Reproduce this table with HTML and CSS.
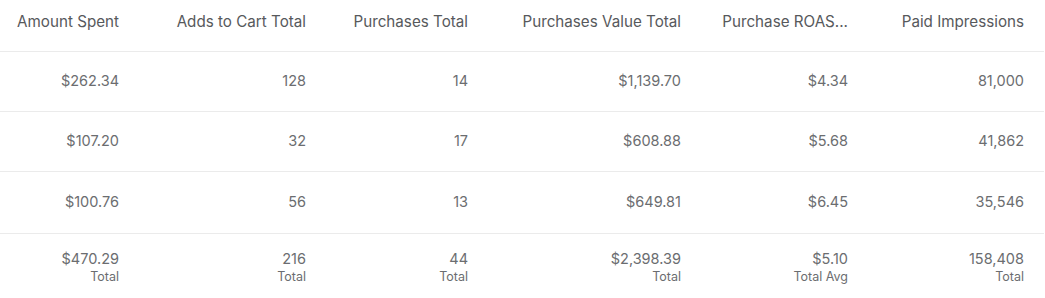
FILE: index.html
```html
<!DOCTYPE html>
<html lang="en">
<head>
<meta charset="utf-8">
<title>Ad metrics</title>
<link rel="stylesheet" href="styles.css">
</head>
<body>
<table class="metrics">
  <colgroup>
    <col class="c1"><col class="c2"><col class="c3"><col class="c4"><col class="c5"><col class="c6">
  </colgroup>
  <thead>
    <tr>
      <th>Amount Spent</th>
      <th>Adds to Cart Total</th>
      <th>Purchases Total</th>
      <th>Purchases Value Total</th>
      <th>Purchase ROAS...</th>
      <th>Paid Impressions</th>
    </tr>
  </thead>
  <tbody>
    <tr>
      <td>$262.34</td><td>128</td><td>14</td><td>$1,139.70</td><td>$4.34</td><td>81,000</td>
    </tr>
    <tr>
      <td>$107.20</td><td>32</td><td>17</td><td>$608.88</td><td>$5.68</td><td>41,862</td>
    </tr>
    <tr class="last">
      <td>$100.76</td><td>56</td><td>13</td><td>$649.81</td><td>$6.45</td><td>35,546</td>
    </tr>
  </tbody>
  <tfoot>
    <tr>
      <td><span class="val">$470.29</span><span class="lbl">Total</span></td>
      <td><span class="val">216</span><span class="lbl">Total</span></td>
      <td><span class="val">44</span><span class="lbl">Total</span></td>
      <td><span class="val">$2,398.39</span><span class="lbl">Total</span></td>
      <td><span class="val">$5.10</span><span class="lbl">Total Avg</span></td>
      <td><span class="val">158,408</span><span class="lbl">Total</span></td>
    </tr>
  </tfoot>
</table>
</body>
</html>
```
FILE: styles.css
```css
html, body {
  margin: 0;
  padding: 0;
  background: #ffffff;
}
body {
  font-family: Inter, "Liberation Sans", sans-serif;
  color: #6b6e72;
}
.metrics {
  width: 1044px;
  border-collapse: collapse;
  table-layout: fixed;
}
.c1 { width: 139px; }
.c2 { width: 187px; }
.c3 { width: 162px; }
.c4 { width: 213px; }
.c5 { width: 167px; }
.c6 { width: 176px; }

.metrics th,
.metrics td {
  text-align: right;
  padding: 0 20px 0 0;
  white-space: nowrap;
  overflow: hidden;
}
.metrics th {
  height: 51px;
  font-size: 15.2px;
  font-weight: 400;
  line-height: 20px;
  color: #57595c;
  vertical-align: top;
  padding-top: 12px;
  box-sizing: border-box;
  border-bottom: 1px solid #ebebeb;
}
.metrics tbody td {
  height: 59px;
  font-size: 14.5px;
  line-height: 18px;
  color: #6b6d70;
  border-bottom: 1px solid #ebebeb;
  vertical-align: middle;
}
.metrics tbody tr.last td {
  height: 61px;
  padding-top: 0;
}
.metrics tfoot td {
  height: 64px;
  vertical-align: top;
  padding-top: 16px;
  box-sizing: border-box;
}
.val {
  display: block;
  font-size: 14.5px;
  line-height: 18px;
  color: #6b6d70;
}
.lbl {
  display: block;
  font-size: 12.5px;
  line-height: 18px;
  color: #6b6d70;
}
```
